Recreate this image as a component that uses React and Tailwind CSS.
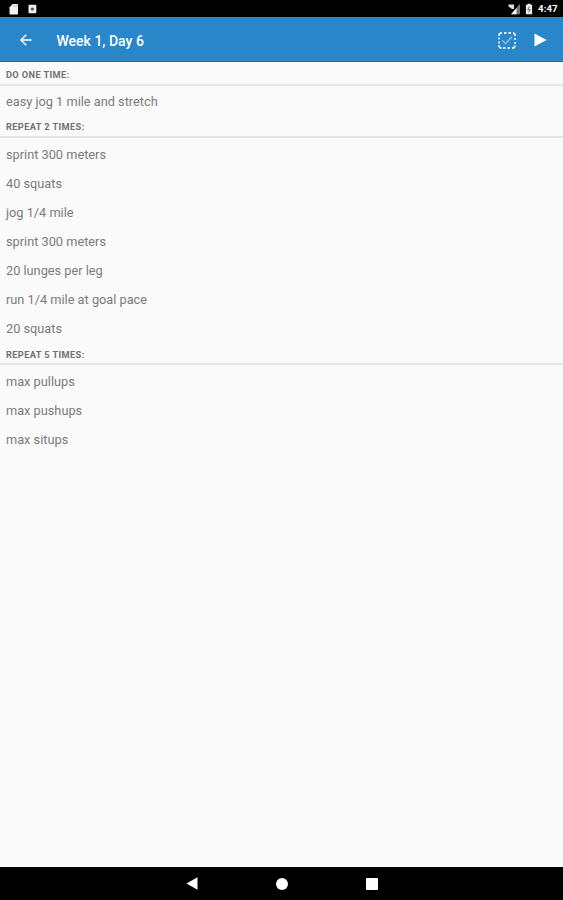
const sections = [
  { title: 'DO ONE TIME:', items: ['easy jog 1 mile and stretch'] },
  {
    title: 'REPEAT 2 TIMES:',
    items: [
      'sprint 300 meters',
      '40 squats',
      'jog 1/4 mile',
      'sprint 300 meters',
      '20 lunges per leg',
      'run 1/4 mile at goal pace',
      '20 squats',
    ],
  },
  { title: 'REPEAT 5 TIMES:', items: ['max pullups', 'max pushups', 'max situps'] },
];

const StatusBar = () => (
  <div className="flex h-[16.5px] shrink-0 items-center justify-between bg-black pt-[2px] pr-[5.5px] pl-[9px] text-white">
    <div className="flex items-center gap-[9px]">
      <svg width="10" height="12" viewBox="0 0 10 12" fill="#f2f2f2">
        <path d="M3.5 1H8a1 1 0 0 1 1 1v8.5a1 1 0 0 1-1 1H1.5a1 1 0 0 1-1-1V4.5z" />
        <path d="M4.5 2v1.700M6 2v1.700M7.500 2v1.700" stroke="#999" strokeWidth=".6" />
      </svg>
      <svg width="9" height="10" viewBox="0 0 9 10">
        <rect x=".5" y=".7" width="7.8" height="8.6" rx=".7" fill="#eee" />
        <circle cx="4.4" cy="5" r="1.6" fill="#555" />
      </svg>
    </div>
    <div className="flex items-center">
      <svg width="13" height="12" viewBox="0 0 13 12">
        <path d="M12 .8v10.400H3z" fill="#777" />
        <path d="M8.500 5v6.200H3z" fill="#fff" />
        <path d="M.5 1.500h5.500v4.500L4 6 .5 3.500z" fill="#ddd" />
      </svg>
      <svg className="ml-[4px]" width="8" height="12" viewBox="0 0 8 12">
        <path d="M2.500 .7h3v1h1.600v9.600H.9V1.700h1.600z" fill="#eee" />
        <path d="M4.300 3.500 2.800 6.700h2.400L3.700 9.300" stroke="#666" fill="none" />
      </svg>
      <span className="ml-[5px] text-[9.7px] leading-3 font-bold">4:47</span>
    </div>
  </div>
);

const AppBar = () => (
  <header className="flex h-[45.5px] shrink-0 items-center border-b border-[#0e71b8] bg-[#2886c9] pt-[3px] pr-[16px] pl-[20px] text-white">
    <svg width="12" height="12" viewBox="0 0 12 12" fill="none" stroke="#fff" strokeWidth="1.400">
      <path d="M11.700 6H1.200M6.200 .8 1 6l5.200 5.200" />
    </svg>
    <h1 className="ml-[24.5px] pt-px text-[14px] leading-4 font-medium">Week 1, Day 6</h1>
    <div className="ml-auto flex items-center">
      <svg width="18" height="17" viewBox="0 0 18 17" fill="none" stroke="#d8ebf8">
        <path
          strokeWidth="1.8"
          d="M1 4V2.500L2.500 1H4M6 1h2.500M10.500 1H13M15 1h.5L17 2.500V4M17 6v2M17 10v2M17 13.500v1L15.500 16H14M12 16H9.500M7.500 16H5M3.500 16h-1L1 14.500V13M1 11.500v-2M1 7.500v-2"
        />
        <path strokeWidth="1.4" stroke="#8dc0e6" d="m4.500 8.500 3 3.300L14 4.800" />
      </svg>
      <svg className="ml-[18.5px]" width="13" height="14" viewBox="0 0 13 14" fill="#fff">
        <path d="M.5 .5 12.500 7 .5 13.500z" />
      </svg>
    </div>
  </header>
);

const Section = ({ title, items }) => (
  <section>
    <h2 className="flex h-[23.3px] items-center border-b-2 border-[#e6e6e6] pt-[4px] pl-[6px] text-[9.2px] font-bold tracking-[0.4px] text-[#707070]">
      {title}
    </h2>
    <ul>
      {items.map((item, i) => (
        <li key={i} className="flex h-[29.15px] items-center pt-[3px] pl-[6px] text-[12.75px] text-[#7a7a7a]">
          {item}
        </li>
      ))}
    </ul>
  </section>
);

const NavBar = () => (
  <nav className="flex h-[33px] shrink-0 items-center justify-center gap-[78px] bg-black">
    <svg width="12" height="13" viewBox="0 0 12 13" fill="#fff">
      <path d="M11.500 .3v12.400L.5 6.500z" />
    </svg>
    <div className="h-[12px] w-[12px] rounded-full bg-white" />
    <div className="h-[12px] w-[12px] rounded-[1px] bg-white" />
  </nav>
);

const App = () => {
  return (
    <div className="flex h-screen flex-col overflow-hidden bg-[#fafafa] font-['Roboto',sans-serif]">
      <StatusBar />
      <AppBar />
      <main className="flex-1 pt-[0.3px]">
        {sections.map((section) => (
          <Section key={section.title} title={section.title} items={section.items} />
        ))}
      </main>
      <NavBar />
    </div>
  );
};

export default App;
